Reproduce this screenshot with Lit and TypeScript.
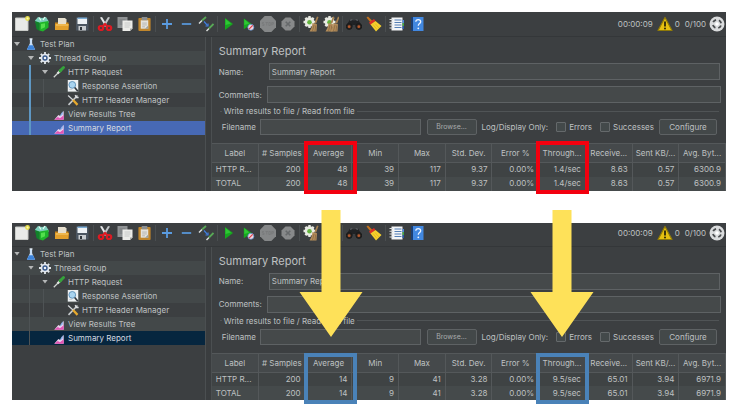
import { LitElement, html, svg, css, nothing, TemplateResult, SVGTemplateResult } from "lit";
import { customElement, property } from "lit/decorators.js";
import { classMap } from "lit/directives/class-map.js";
import { styleMap } from "lit/directives/style-map.js";

const gear = svg`
  <g fill="#e9ebe4">
    <circle cx="6.500" cy="6" r="4.800"/>
    <path d="M5.300 0h2.400v12H5.300zM.5 4.800h12v2.400H.5z"/>
    <path d="M1.500 2.700L3.200 1l8.300 8.300-1.700 1.700zM9.800 1l1.700 1.700L3.200 11 1.500 9.300z"/>
  </g>
  <circle cx="6.500" cy="6.300" r="2.300" fill="#63b43f"/>`;

const broomHead = (x: number) => svg`
  <g transform="translate(${x} 0)">
    <path d="M14 .5l1.500.600-2.300 6.500-1.800-.600z" fill="#a8824f"/>
    <path d="M9.500 7l4.500 1.200-.500 7.300H6.500c1.700-2.500 2.600-5 3-8.500z" fill="#b38d5b"/>
    <path d="M11 9l-1.500 6M12.700 9.500l-.700 5.500" stroke="#86643c" stroke-width=".7"/>
  </g>`;

const ICONS: Record<string, SVGTemplateResult> = {
  new: svg`
    <path d="M1.500 2h12.500v12.500H1.500z" fill="#e9eae8" stroke="#c9cbc8"/>
    <circle cx="13.500" cy="2.500" r="2.400" fill="#e8e04e"/><circle cx="13.500" cy="2.500" r="1" fill="#fffbb8"/>`,
  templates: svg`
    <path d="M1 4.500L4 1l4 1 4-1 2.500 4v2H2z" fill="#7fd0bd"/>
    <path d="M5 1.500l2 3M9 4l2-3" stroke="#e9fff6" stroke-width="1.200"/>
    <path d="M1 5l4.500 1.500V15L2.500 13z" fill="#11822a"/>
    <path d="M5.500 6.500L14.500 5v6.500L9 15.500l-3.500-1z" fill="#1fb52b"/>
    <path d="M7 8l4-.700v4L7 13z" fill="#52e04c"/>`,
  open: svg`
    <path d="M4 2h7l1.500 1.500V9H4z" fill="#e6dfce"/>
    <path d="M1 6.500h3V9h8V6.500h2.500V14H1z" fill="#c9861a"/>
    <path d="M1 8h14l-.800 6H1z" fill="#e3a02c"/>
    <path d="M2 9h12" stroke="#f8ce72"/>`,
  save: svg`
    <path d="M2 1.500h12.500V14.500H2z" fill="#4c5661"/>
    <path d="M3.500 2H13v6H3.500z" fill="#eef2f5"/>
    <path d="M3.500 1.500h9.500v1.500H3.500z" fill="#7badd6"/>
    <path d="M4.500 10h7.500v4.500H4.500z" fill="#c8cccf"/>
    <path d="M6 11h2v3H6z" fill="#2f353a"/>`,
  cut: svg`
    <path d="M3 1.500l2-.500 5.500 9-2 .800z" fill="#e4e6e8"/>
    <path d="M13 1.500L11 1 5.500 10l2 .800z" fill="#c2c5c8"/>
    <g fill="none" stroke="#dc1a22" stroke-width="2.200">
      <ellipse cx="4" cy="12" rx="2.200" ry="2"/><ellipse cx="12" cy="12" rx="2.200" ry="2"/>
      <path d="M5.500 10.500L8 8l2.500 2.500"/>
    </g>`,
  copy: svg`
    <path d="M.500 1h10V12H.500z" fill="#8f9294"/><path d="M2.500 4h6M2.500 6h6M2.500 8h6" stroke="#74787a"/>
    <path d="M5.500 4.500h10v8L13 15H5.500z" fill="#ecece9"/>
    <path d="M7.500 7h6M7.500 9h6M7.500 11h5" stroke="#bfc1bf" stroke-width=".8"/>
    <path d="M15.500 12.500H13V15z" fill="#a6a8a6"/>`,
  paste: svg`
    <rect x="1.500" y="1.500" width="13" height="14" rx="1" fill="#c0862c"/>
    <path d="M4 4h8v9H4z" fill="#e4e3dd"/>
    <path d="M5.500 7h5M5.500 9h5M5.500 11h3" stroke="#a9aaa6" stroke-width=".8"/>
    <path d="M5 .500h6v3.500H5z" fill="#8b8f92"/><path d="M12 9.500V13H8.500z" fill="#9da09c"/>`,
  plus: svg`<path d="M8 3v10M3 8h10" stroke="#5a9be0" stroke-width="1.800"/>`,
  minus: svg`<path d="M3 8h10" stroke="#5a9be0" stroke-width="1.800"/>`,
  toggle: svg`
    <path d="M1 7.500l3-3" stroke="#dfe2e0" stroke-width="1.400"/><path d="M4 4.500L8 1" stroke="#59a957" stroke-width="1.800"/>
    <path d="M6 5.500l3.500 4" stroke="#3f7fe0" stroke-width="1.200"/><path d="M7.500 10h2.500v-2.500" fill="none" stroke="#3f7fe0" stroke-width="1.200"/>
    <path d="M8.500 15l2.500-2.500" stroke="#dfe2e0" stroke-width="1.400"/><path d="M11 12.500L15.500 8" stroke="#59a957" stroke-width="1.800"/>`,
  start: svg`<path d="M4 2L12 8l-8 6z" fill="#17a81f"/><path d="M4.500 3v6L10 7.500z" fill="#2fc735"/>`,
  startNow: svg`
    <path d="M3 2l8.500 6L3 13.500z" fill="#17a81f"/><path d="M3.500 3v6L9 7.500z" fill="#2fc735"/>
    <circle cx="10.500" cy="11.500" r="3.200" fill="#f3d7dc" stroke="#5a8fd0" stroke-width=".8"/>
    <path d="M8.500 13.500l4-4" stroke="#d83848" stroke-width="1.300"/>`,
  stop: svg`
    <path d="M4.700 0h6.600L16 4.700v6.600L11.300 16H4.700L0 11.300V4.700z" fill="#858788"/>
    <path d="M4 6.500H2.300v1.500H4v1.500H2.300M5.500 6.500h2.500M6.700 6.500v3M8.800 6.500h1.500v3H8.800zM11.700 9.500v-3h1.700v1.600h-1.700" fill="none" stroke="#747677" stroke-width=".6"/>`,
  shutdown: svg`
    <path d="M5.500 1.500h5L14.500 5.500v5L10.500 14.500h-5L1.500 10.500v-5z" fill="#87898a"/>
    <path d="M5.700 5.700l4.600 4.600M10.300 5.700l-4.600 4.600" stroke="#66696b" stroke-width="1.600"/>`,
  clear: svg`${gear}${broomHead(0)}`,
  clearAll: svg`${gear}${broomHead(-4)}${broomHead(1)}`,
  search: svg`
    <path d="M4 3.500L6.500 3 8 5l1.500-2 2.500.500L16 10l-4 2.500L9 9H7l-3 3.500L0 10z" fill="#202224"/>
    <path d="M4 4.200l2.500-.500M9.500 3.700l2.500.500" stroke="#70757a"/>
    <circle cx="3.200" cy="10.500" r="2.900" fill="#2c2421" stroke="#17191a"/><circle cx="12.800" cy="10.500" r="2.900" fill="#2c2421" stroke="#17191a"/>
    <circle cx="3.200" cy="10.700" r="1.400" fill="#b3592c"/><circle cx="12.800" cy="10.700" r="1.400" fill="#b3592c"/>`,
  broom: svg`
    <path d="M.500 1.500L2 .500l4.500 4.500-2 1.500z" fill="#c4721c"/>
    <path d="M3 6.500l5-3.500 1.500 2L4.500 9z" fill="#dc2f25"/>
    <path d="M4.500 8.500l5-3.500 6 5-5.500 5.500z" fill="#f6d02d"/>
    <path d="M7 8.500l4 5M9 7.500l4 4.500" stroke="#dcb01c" stroke-width=".7"/>`,
  functions: svg`
    <path d="M2.500 1.500h11v13h-11z" fill="#f3f5f7"/>
    <path d="M5.500 4h7M5.500 6.500h7M5.500 9h7M5.500 11.500h7" stroke="#547fb5" stroke-width="1.100"/>
    <path d="M.500 3.500h3.500M.500 6.200h3.500M.500 9h3.500M.500 12h3.500" stroke="#d9dcdd" stroke-width="1.100"/>
    <path d="M13.500 4H15v3h-1.500z" fill="#4c8ae0"/><path d="M13.500 7H15v3h-1.500z" fill="#41a847"/><path d="M13.500 10H15v3h-1.500z" fill="#2759a8"/>`,
  help: svg`
    <path d="M2 1h2.500v14H2z" fill="#1b3f74"/><path d="M4 1h10.500v14H4z" fill="#4288e0"/>
    <path d="M6.800 5.800c0-3 4.900-3 4.900 0 0 1.800-2.400 1.800-2.400 4" fill="none" stroke="#eef5ff" stroke-width="1.300"/>
    <circle cx="9.300" cy="12.300" r=".9" fill="#eef5ff"/>`,
  warning: svg`
    <path d="M8 1.500L15 14.500H1z" fill="#e6c010" stroke="#8f7a08" stroke-width="1.200" stroke-linejoin="round"/>
    <path d="M8 5.500v5" stroke="#2b2607" stroke-width="1.800"/><circle cx="8" cy="12.500" r="1" fill="#2b2607"/>`,
  status: svg`
    <circle cx="8" cy="8" r="7.500" fill="#d9dbdc"/>
    <circle cx="8" cy="8" r="4.200" fill="none" stroke="#4a4d4f" stroke-width="1.800" stroke-dasharray="3.600 3" stroke-dashoffset="-1.500"/>
    <circle cx="8" cy="8" r="1.800" fill="#fff"/>`,
  flask: svg`
    <path d="M6.500 1h3v6l4 8.500h-11L6.500 7z" fill="#c9def5"/>
    <path d="M5.300 9.500h5.400l2.800 6h-11z" fill="#3d83da"/><path d="M6 .500h4v1.500H6z" fill="#eef4fa"/>`,
  group: svg`
    <path d="M6.800 0h2.400v16H6.800zM0 6.800h16v2.400H0zM1.500 3.200l1.700-1.700 11.300 11.300-1.700 1.700zM12.800 1.500l1.700 1.700L3.200 14.500l-1.700-1.700z" fill="#e3e8ee"/>
    <circle cx="8" cy="8" r="5.800" fill="#e3e8ee"/><circle cx="8" cy="8" r="3.600" fill="#37598e"/><circle cx="8" cy="8" r="1.700" fill="#f0f3f6"/>`,
  sampler: svg`
    <path d="M1 15L9 7" stroke="#cfd2d0" stroke-width="1.600"/><path d="M6 10L11 5" stroke="#dfe2df" stroke-width="3"/>
    <path d="M9.500 6.500L14 2" stroke="#35a33b" stroke-width="3.800" stroke-linecap="round"/>`,
  assertion: svg`
    <path d="M1 0h14v15.500H1z" fill="#eef1f3"/>
    <circle cx="7" cy="6.500" r="4.500" fill="#a9d4f0" stroke="#5a8fb8" stroke-width="1.200"/>
    <path d="M10.300 10l4.200 5" stroke="#30363b" stroke-width="2.200"/><path d="M3 12.500h4" stroke="#b9bec2"/>`,
  config: svg`
    <path d="M14 2L2 14.500" stroke="#c9cdd0" stroke-width="2"/><path d="M11 1.500l1.500 3 3 0" fill="none" stroke="#d9dcde" stroke-width="2"/>
    <path d="M1.500 2L8 8" stroke="#d5d8da" stroke-width="1.600"/><path d="M8 8l6 6.500" stroke="#e6a92e" stroke-width="3"/>`,
  listener: svg`
    <path d="M.500 15.500L7 8l3 1.500L15.500 1v14.500z" fill="#ecd3f0"/>
    <path d="M.500 15.500L6 11l3.500 2 6-4.500v7z" fill="#e254b4"/>
    <path d="M10 8l4-6v5l-4 3.500z" fill="#8fb4ee"/>`,
};

const icon = (name: string): TemplateResult =>
  html`<svg class="icon" viewBox="0 0 16 16" aria-hidden="true">${ICONS[name]}</svg>`;

type Tool = { icon: string; label: string; slim?: boolean };

const TOOL_GROUPS: Tool[][] = [
  [
    { icon: "new", label: "New" },
    { icon: "templates", label: "Templates" },
    { icon: "open", label: "Open" },
    { icon: "save", label: "Save" },
  ],
  [
    { icon: "cut", label: "Cut" },
    { icon: "copy", label: "Copy" },
    { icon: "paste", label: "Paste", slim: true },
  ],
  [
    { icon: "plus", label: "Expand all" },
    { icon: "minus", label: "Collapse all", slim: true },
    { icon: "toggle", label: "Toggle" },
  ],
  [
    { icon: "start", label: "Start" },
    { icon: "startNow", label: "Start no pauses", slim: true },
    { icon: "stop", label: "Stop" },
    { icon: "shutdown", label: "Shutdown" },
  ],
  [
    { icon: "clear", label: "Clear" },
    { icon: "clearAll", label: "Clear all" },
  ],
  [
    { icon: "search", label: "Search" },
    { icon: "broom", label: "Reset search" },
  ],
  [
    { icon: "functions", label: "Function helper" },
    { icon: "help", label: "Help" },
  ],
];

type Node = { icon: string; label: string; depth: number; open?: boolean; selected?: boolean };

const TREE: Node[] = [
  { icon: "flask", label: "Test Plan", depth: 0, open: true },
  { icon: "group", label: "Thread Group", depth: 1, open: true },
  { icon: "sampler", label: "HTTP Request", depth: 2, open: true },
  { icon: "assertion", label: "Response Assertion", depth: 3 },
  { icon: "config", label: "HTTP Header Manager", depth: 3 },
  { icon: "listener", label: "View Results Tree", depth: 2 },
  { icon: "listener", label: "Summary Report", depth: 2, selected: true },
];

const HEADERS = [
  "Label", "# Samples", "Average", "Min", "Max", "Std. Dev.",
  "Error %", "Through...", "Receive...", "Sent KB/...", "Avg. Byt...",
];

// Left edges of the highlighted columns, as a share of the table width.
const MARKS = [18, 63];

@customElement("report-window")
export class ReportWindow extends LitElement {
  @property({ attribute: false }) values: string[] = [];
  @property({ type: Boolean, reflect: true }) after = false;

  static styles = css`
    :host {
      display: block;
      color: #bfc1c2;
      background: #3c3f41;
      font: 8px/14px Inter, "Liberation Sans", sans-serif;
      --line: #54585a;
      --mark: #f3000f;
      --selected: #4769b5;
    }
    :host([after]) {
      --mark: #4a82b8;
      --selected: #06263f;
    }
    * { box-sizing: border-box; }
    button, input { font: inherit; color: inherit; margin: 0; }
    .icon { display: block; width: 100%; height: 100%; }

    .toolbar {
      display: flex;
      align-items: center;
      height: 25px;
      padding: 0 1px 1px 2px;
      border-bottom: 1px solid #343739;
    }
    :host([after]) .toolbar { height: 24px; padding-bottom: 2px; }
    .group { display: flex; gap: 4px; }
    .group + .group { margin-left: 3px; padding-left: 3px; border-left: 1px solid #4a4e50; }
    .tool { width: 16px; height: 16px; padding: 0; border: 0; background: none; }
    .slim { width: 15px; }
    .status { display: flex; align-items: center; margin-left: auto; }
    .status .icon { width: 16px; height: 16px; }
    .clock { margin-right: 4px; }
    .errors { margin: 0 5px 0 2px; }
    .threads { margin-right: 3px; }

    .body { display: grid; grid-template-columns: 27% 7px minmax(0, 1fr); }
    .tree { list-style: none; margin: 0; padding: 0; }
    .node { display: flex; height: 14px; align-items: center; white-space: nowrap; }
    .node:nth-child(even) { background: #434849; }
    .node.selected { background: var(--selected); color: #d5d9e0; }
    .indent { width: 14px; height: 14px; }
    .guide::before {
      content: "";
      display: block;
      width: 1px;
      height: 14px;
      margin-left: 3px;
      background: #4e5355;
    }
    .guide.active::before { width: 2px; background: #5e97c3; }
    .twisty { width: 10px; padding-left: 2px; }
    .twisty.open::before {
      content: "";
      display: block;
      width: 6px;
      height: 4px;
      background: #b4b6b7;
      clip-path: polygon(0 0, 100% 0, 50% 100%);
    }
    .glyph { width: 12px; height: 12px; margin: 0 3px; }
    .glyph.small { width: 10px; height: 10px; margin: 2px 4px 0; }
    .splitter { border: solid #4b4f51; border-width: 0 1px; background: #3a3d3f; }

    .main { padding-top: 6px; }
    .title { margin: 0 0 4px 7px; font-size: 11px; line-height: 16px; font-weight: 400; }
    .row { display: flex; align-items: center; margin: 0 6px 6px 7px; }
    .row label { flex: none; width: 50px; }
    .row.wide { margin-bottom: 3px; margin-right: 5px; }
    .row.wide label { width: 48px; }
    .field {
      flex: 1;
      min-width: 0;
      height: 17px;
      padding: 0 2px;
      background: #45494a;
      border: 1px solid #5e6264;
      border-radius: 0;
    }
    .file {
      margin: 0 7px 8px 8px;
      padding: 3px 0 0;
      border: 0 solid #505456;
      border-top-width: 1px;
    }
    .file legend { margin-left: 2px; padding: 0 2px; line-height: 10px; }
    .controls { display: flex; align-items: center; height: 16px; padding: 0 2px; white-space: nowrap; }
    .controls .field { height: 16px; margin: 0 6px 0 4px; }
    .button {
      height: 16px;
      padding: 0;
      line-height: 12px;
      text-align: center;
      background: #434849;
      border: 1px solid #5e6264;
      border-radius: 2px;
    }
    .browse { width: 50px; margin-right: 5px; font-size: 7px; color: #a9abac; }
    .configure { width: 58px; margin-left: 5px; }
    .check { display: flex; align-items: center; gap: 3px; margin-left: 8px; }
    .check input {
      appearance: none;
      width: 10px;
      height: 10px;
      background: #43494a;
      border: 1px solid #65696b;
      border-radius: 1px;
    }

    .results { position: relative; }
    .table { width: 100%; table-layout: fixed; border-collapse: collapse; }
    .table th {
      height: 19px;
      padding: 0;
      font-weight: 400;
      white-space: nowrap;
      background: #45494b;
      border: 1px solid var(--line);
      border-width: 1px 1px 1px 0;
    }
    .table td {
      height: 14px;
      padding: 0 4px;
      line-height: 13px;
      text-align: right;
      white-space: nowrap;
      background: #3f4344;
      border-right: 1px solid var(--line);
    }
    .table tr:nth-child(even) td { background: #454a4b; }
    .table .name { text-align: left; }

    .mark {
      position: absolute;
      top: -2px;
      bottom: -3px;
      width: 53px;
      border: 4px solid var(--mark);
    }
    :host([after]) .mark { top: 0; bottom: -4px; }
    .arrow {
      position: absolute;
      bottom: calc(100% + 20px);
      left: 50%;
      width: 64px;
      height: 127px;
      margin-left: -32px;
      fill: #fee159;
    }
  `;

  private node(n: Node) {
    const indents = Array.from({ length: n.depth }, (_, i) => i);
    return html`
      <li class=${classMap({ node: true, selected: !!n.selected })} role="treeitem"
          aria-level=${n.depth + 1} aria-selected=${n.selected ? "true" : "false"}>
        ${indents.map((i) => html`<span class=${classMap({ indent: true, guide: i > 0, active: i === 1 && !this.after })}></span>`)}
        <span class=${classMap({ twisty: true, open: !!n.open })}></span>
        <span class=${classMap({ glyph: true, small: n.icon === "listener" })}>${icon(n.icon)}</span>
        <span>${n.label}</span>
      </li>`;
  }

  render() {
    return html`
      <div class="toolbar" role="toolbar">
        ${TOOL_GROUPS.map((g) => html`
          <div class="group">
            ${g.map((t) => html`<button class=${classMap({ tool: true, slim: !!t.slim })} aria-label=${t.label}>${icon(t.icon)}</button>`)}
          </div>`)}
        <div class="status">
          <span class="clock">00:00:09</span>
          ${icon("warning")}
          <span class="errors">0</span>
          <span class="threads">0/100</span>
          ${icon("status")}
        </div>
      </div>
      <div class="body">
        <ul class="tree" role="tree">${TREE.map((n) => this.node(n))}</ul>
        <div class="splitter"></div>
        <div class="main">
          <h2 class="title">Summary Report</h2>
          <div class="row">
            <label for="name">Name:</label>
            <input class="field" id="name" value="Summary Report">
          </div>
          <div class="row wide">
            <label for="comments">Comments:</label>
            <input class="field" id="comments">
          </div>
          <fieldset class="file">
            <legend>Write results to file / Read from file</legend>
            <div class="controls">
              <label for="filename">Filename</label>
              <input class="field" id="filename">
              <button class="button browse">Browse...</button>
              <span>Log/Display Only:</span>
              <label class="check"><input type="checkbox">Errors</label>
              <label class="check"><input type="checkbox">Successes</label>
              <button class="button configure">Configure</button>
            </div>
          </fieldset>
          <div class="results">
            <table class="table">
              <thead><tr>${HEADERS.map((h) => html`<th scope="col">${h}</th>`)}</tr></thead>
              <tbody>
                ${["HTTP R...", "TOTAL"].map((name) => html`
                  <tr><td class="name">${name}</td>${this.values.map((v) => html`<td>${v}</td>`)}</tr>`)}
              </tbody>
            </table>
            ${MARKS.map((left) => html`
              <div class="mark" style=${styleMap({ left: `${left}%` })}>
                ${this.after
                  ? html`<svg class="arrow" viewBox="0 0 64 127" aria-hidden="true"><path d="M22.500 0h19v82H63.500L32 127 .500 82h22z"/></svg>`
                  : nothing}
              </div>`)}
          </div>
        </div>
      </div>`;
  }
}

@customElement("app-root")
export class AppRoot extends LitElement {
  static styles = css`
    :host {
      display: flex;
      flex-direction: column;
      gap: 32px;
      padding: 12px 20px 12px 12px;
      background: #fff;
    }
  `;

  render() {
    return html`
      <report-window
        .values=${["200", "48", "39", "117", "9.37", "0.00%", "1.4/sec", "8.63", "0.57", "6300.9"]}></report-window>
      <report-window after
        .values=${["200", "14", "9", "41", "3.28", "0.00%", "9.5/sec", "65.01", "3.94", "6971.9"]}></report-window>`;
  }
}
